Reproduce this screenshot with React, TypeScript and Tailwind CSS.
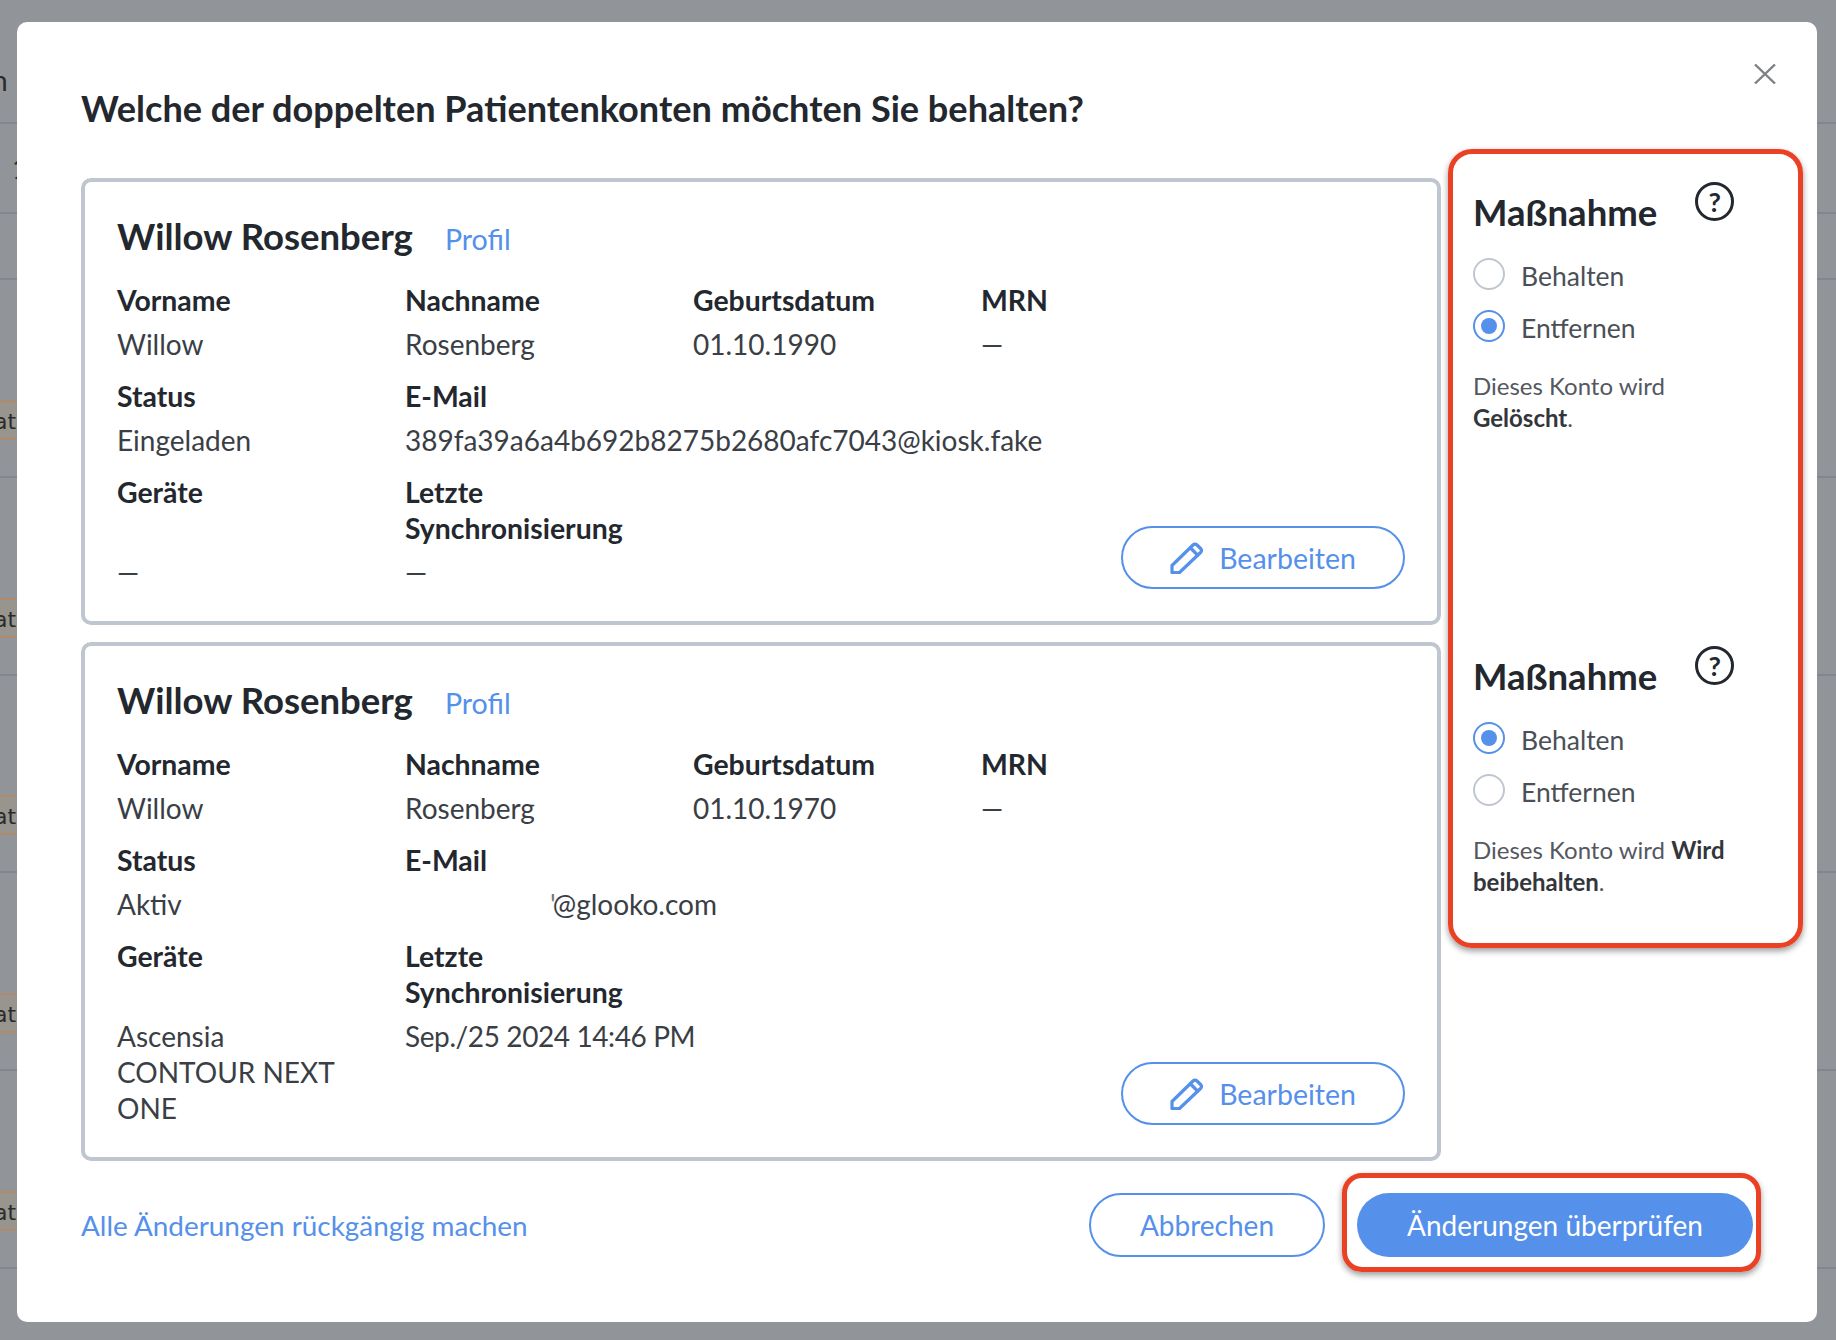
import React from 'react';

const backdropRows = [
  { h: 'h-[124px]', kind: 'n' },
  { h: 'h-[90px]', kind: 'one' },
  { h: 'h-[66px]', kind: '' },
  { h: 'h-[198px]', kind: 'badge' },
  { h: 'h-[198px]', kind: 'badge' },
  { h: 'h-[197px]', kind: 'badge' },
  { h: 'h-[198px]', kind: 'badge' },
  { h: 'h-[198px]', kind: 'badge' },
];

const PencilIcon = () => (
  <svg viewBox="0 0 33 32" className="w-[33px] h-[32px]" fill="none" stroke="currentColor" strokeWidth="3.2" strokeLinejoin="round" strokeLinecap="round">
    <path d="M2 30.5 L2 23.5 L23 3 Q25 1 27 3 L30.5 6.5 Q32.5 8.5 30.5 10.5 L9.5 30.5 Z" />
    <path d="M20.5 6 L27.5 13" />
  </svg>
);

const CloseIcon = () => (
  <svg viewBox="0 0 22 20" className="w-[22px] h-[20px]" fill="none" stroke="#7e8186" strokeWidth="2.4">
    <path d="M1 0.5 L21 19.5 M21 0.5 L1 19.5" />
  </svg>
);

const Field = ({ label, value, className = '' }: { label: string; value: React.ReactNode; className?: string }) => (
  <div className={className}>
    <div className="font-bold text-[28.4px] text-[#23272e]">{label}</div>
    <div className="mt-2 text-[#3a3e45]">{value}</div>
  </div>
);

const Radio = ({ label, checked }: { label: string; checked: boolean }) => (
  <div className="flex items-center gap-[16px] h-8">
    <span className={`flex items-center justify-center w-8 h-8 rounded-full border-2 ${checked ? 'border-[#5590ea]' : 'border-[#c0c6d0]'}`}>
      {checked && <span className="w-4 h-4 rounded-full bg-[#5590ea]" />}
    </span>
    <span className="text-[26.5px] pt-[4px] text-[#4a4f57]">{label}</span>
  </div>
);

const EditButton = () => (
  <button className="flex items-center justify-center gap-[16px] w-[284px] h-[63px] mb-px shrink-0 rounded-full border-2 border-[#5590ea] text-[28.5px] text-[#5590ea]">
    <PencilIcon />
    Bearbeiten
  </button>
);

type Account = {
  birth: string;
  status: string;
  email: React.ReactNode;
  device: React.ReactNode;
  sync: React.ReactNode;
  keep: boolean;
};

const accounts: Account[] = [
  {
    birth: '01.10.1990',
    status: 'Eingeladen',
    email: '389fa39a6a4b692b8275b2680afc7043@kiosk.fake',
    device: '—',
    sync: '—',
    keep: false,
  },
  {
    birth: '01.10.1970',
    status: 'Aktiv',
    email: (
      <span className="pl-[145px]">
        <span className="-mr-[3px] text-[#77797d]">'</span>@glooko.com
      </span>
    ),
    device: 'Ascensia CONTOUR NEXT ONE',
    sync: 'Sep./25 2024 14:46 PM',
    keep: true,
  },
];

const AccountRow = ({ account }: { account: Account }) => (
  <div className="flex">
    <div className="w-[1360px] shrink-0 rounded-[10px] border-4 border-[#c0c6d0] pl-[32px] pr-[32px] pt-8 pb-[31px]">
      <div className="flex items-baseline gap-[32px] mb-6">
        <h2 className="text-[36.5px] leading-[44px] font-bold text-[#23272e]">Willow Rosenberg</h2>
        <a className="text-[28.6px] text-[#5590ea]">Profil</a>
      </div>
      <div className="grid grid-cols-[288px_288px_288px_288px] mb-4">
        <Field label="Vorname" value="Willow" />
        <Field label="Nachname" value="Rosenberg" />
        <Field label="Geburtsdatum" value={account.birth} />
        <Field label="MRN" value="—" />
      </div>
      <div className="grid grid-cols-[288px_864px] mb-4">
        <Field label="Status" value={account.status} />
        <Field label="E-Mail" value={account.email} />
      </div>
      <div className="flex items-end justify-between">
        <div className="grid grid-cols-[288px_288px] gap-y-2">
          <div className="font-bold text-[28.4px] text-[#23272e]">Geräte</div>
          <div className="font-bold text-[28.4px] text-[#23272e] w-[260px]">Letzte Synchronisierung</div>
          <div className="text-[#3a3e45] w-[225px]">{account.device}</div>
          <div className="text-[#3a3e45] whitespace-nowrap tracking-[-0.4px]">{account.sync}</div>
        </div>
        <EditButton />
      </div>
    </div>
    <div className="w-[279px] shrink-0 ml-[32px] pt-[12px]">
      <div className="flex items-start gap-[38px]">
        <h3 className="text-[36.5px] leading-[44px] font-bold text-[#23272e]">Maßnahme</h3>
        <span className="flex items-center justify-center w-[39px] h-[39px] -mt-[8px] rounded-full border-[3px] border-[#23272e] text-[27px] font-bold text-[#23272e]">?</span>
      </div>
      <div className="flex flex-col gap-5 mt-[24px]">
        <Radio label="Behalten" checked={account.keep} />
        <Radio label="Entfernen" checked={!account.keep} />
      </div>
      <p className="w-[270px] mt-[28px] text-[24px] leading-[32px] text-[#54585f]">
        Dieses Konto wird{' '}
        <b className="font-bold text-[#33363b]">{account.keep ? 'Wird beibehalten' : 'Gelöscht'}</b>.
      </p>
    </div>
  </div>
);

const App = () => {
  return (
    <div className="relative h-[1340px] w-[1836px] overflow-hidden bg-[#919498] font-['Lato',sans-serif] text-[28px] leading-[36px]">
      {backdropRows.map((row, i) => (
        <div key={i} className={`${row.h} border-b-2 border-[#83878d] flex text-[#2b2b2b]`}>
          {row.kind === 'n' && <span className="-ml-[8px] mt-[62px]">n</span>}
          {row.kind === 'one' && <span className="ml-[12px] mt-[26px]">1</span>}
          {row.kind === 'badge' && (
            <span className="self-end mb-[36px] h-[40px] w-[17px] border-y-2 border-[#b08a6c] bg-[#98958f] font-['DejaVu_Sans',sans-serif] text-[22px] leading-[40px] whitespace-nowrap">
              <span className="-ml-[6px]">at</span>
            </span>
          )}
        </div>
      ))}

      <div className="absolute left-[17px] top-[22px] w-[1800px] h-[1300px] rounded-[10px] bg-white pl-16 pr-16 pt-[64px]">
        <button className="absolute right-[41px] top-[42px]"><CloseIcon /></button>
        <h1 className="text-[36.12px] leading-[44px] font-bold text-[#23272e] mb-[48px]">
          Welche der doppelten Patientenkonten möchten Sie behalten?
        </h1>

        <div className="flex flex-col gap-[17px]">
          {accounts.map((account) => (
            <AccountRow key={account.birth} account={account} />
          ))}
        </div>

        <div className="flex items-center justify-between mt-[32px]">
          <a className="text-[27.9px] text-[#5590ea]">Alle Änderungen rückgängig machen</a>
          <div className="flex gap-[32px]">
            <button className="w-[236px] h-[64px] rounded-full border-2 border-[#5590ea] text-[#5590ea]">Abbrechen</button>
            <div className="relative">
              <button className="w-[396px] h-[64px] rounded-full bg-[#5590ea] text-white">Änderungen überprüfen</button>
              <div className="absolute -left-[15px] -top-[20px] -right-[8px] -bottom-[15px] rounded-[20px] border-[5px] border-[#ea4125] shadow-[0_3px_6px_rgba(0,0,0,0.4)] pointer-events-none" />
            </div>
          </div>
        </div>

        <div className="absolute left-[1431px] top-[127px] w-[355px] h-[799px] rounded-[24px] border-[5px] border-[#ea4125] shadow-[0_3px_6px_rgba(0,0,0,0.4)] pointer-events-none" />
      </div>
    </div>
  );
};

export default App;
